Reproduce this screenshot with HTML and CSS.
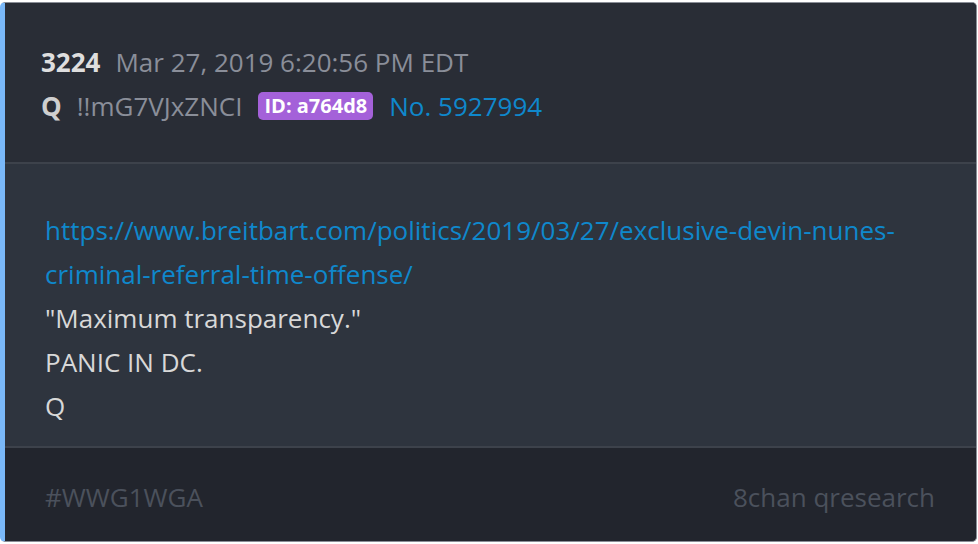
FILE: index.html
```html
<!DOCTYPE html>
<html>
<head>
<meta charset="utf-8">
<link rel="stylesheet" href="styles.css">
</head>
<body>
<div class="card">
  <div class="head">
    <div class="row">
      <span class="num">3224</span>
      <span class="muted">Mar 27, 2019 6:20:56 PM EDT</span>
    </div>
    <div class="row">
      <span class="name">Q</span>
      <span class="muted">!!mG7VJxZNCI</span>
      <span class="badge">ID: a764d8</span>
      <span class="no">No. 5927994</span>
    </div>
  </div>
  <div class="body">
    <a class="link" href="#">https://www.breitbart.com/politics/2019/03/27/exclusive-devin-nunes-<br>criminal-referral-time-offense/</a>
    <div>"Maximum transparency."</div>
    <div>PANIC IN DC.</div>
    <div>Q</div>
  </div>
  <div class="foot">
    <span>#WWG1WGA</span>
    <span>8chan qresearch</span>
  </div>
</div>
</body>
</html>
```
FILE: styles.css
```css
html, body {
  margin: 0;
  padding: 0;
  background: #ffffff;
}
body {
  font-family: "Open Sans", "Noto Sans", sans-serif;
  font-size: 26px;
}
.card {
  box-sizing: border-box;
  margin: 2px 1px 0 0;
  height: 540px;
  border: 1px solid #8a8e97;
  border-left: 5px solid #7ab8f8;
  border-radius: 5px;
  overflow: hidden;
  display: flex;
  flex-direction: column;
  background: #22252d;
}
.head {
  background: #292d36;
  padding: 37px 36px 34px;
  border-bottom: 2px solid #3d424b;
}
.row {
  display: flex;
  align-items: center;
  gap: 16px;
  line-height: 44px;
}
.num {
  font-weight: 700;
  color: #dedede;
}
.name {
  font-weight: 700;
  color: #cfcfcf;
}
.muted {
  color: #8a8e99;
  margin-left: -1px;
}
.badge {
  background: #a461d9;
  color: #ffffff;
  font-weight: 700;
  font-size: 20px;
  line-height: 28px;
  padding: 0 6px;
  border-radius: 5px;
}
.no {
  color: #0f88cc;
}
.body {
  background: #2e343e;
  padding: 44px 40px 18px 40px;
  line-height: 44px;
  color: #d8d8d8;
  border-bottom: 2px solid #3d424b;
}
.link {
  color: #0f88cc;
  text-decoration: none;
}
.foot {
  flex: 1;
  display: flex;
  justify-content: space-between;
  align-items: center;
  padding: 4px 41px 0 40px;
  color: #4b515c;
}
```
